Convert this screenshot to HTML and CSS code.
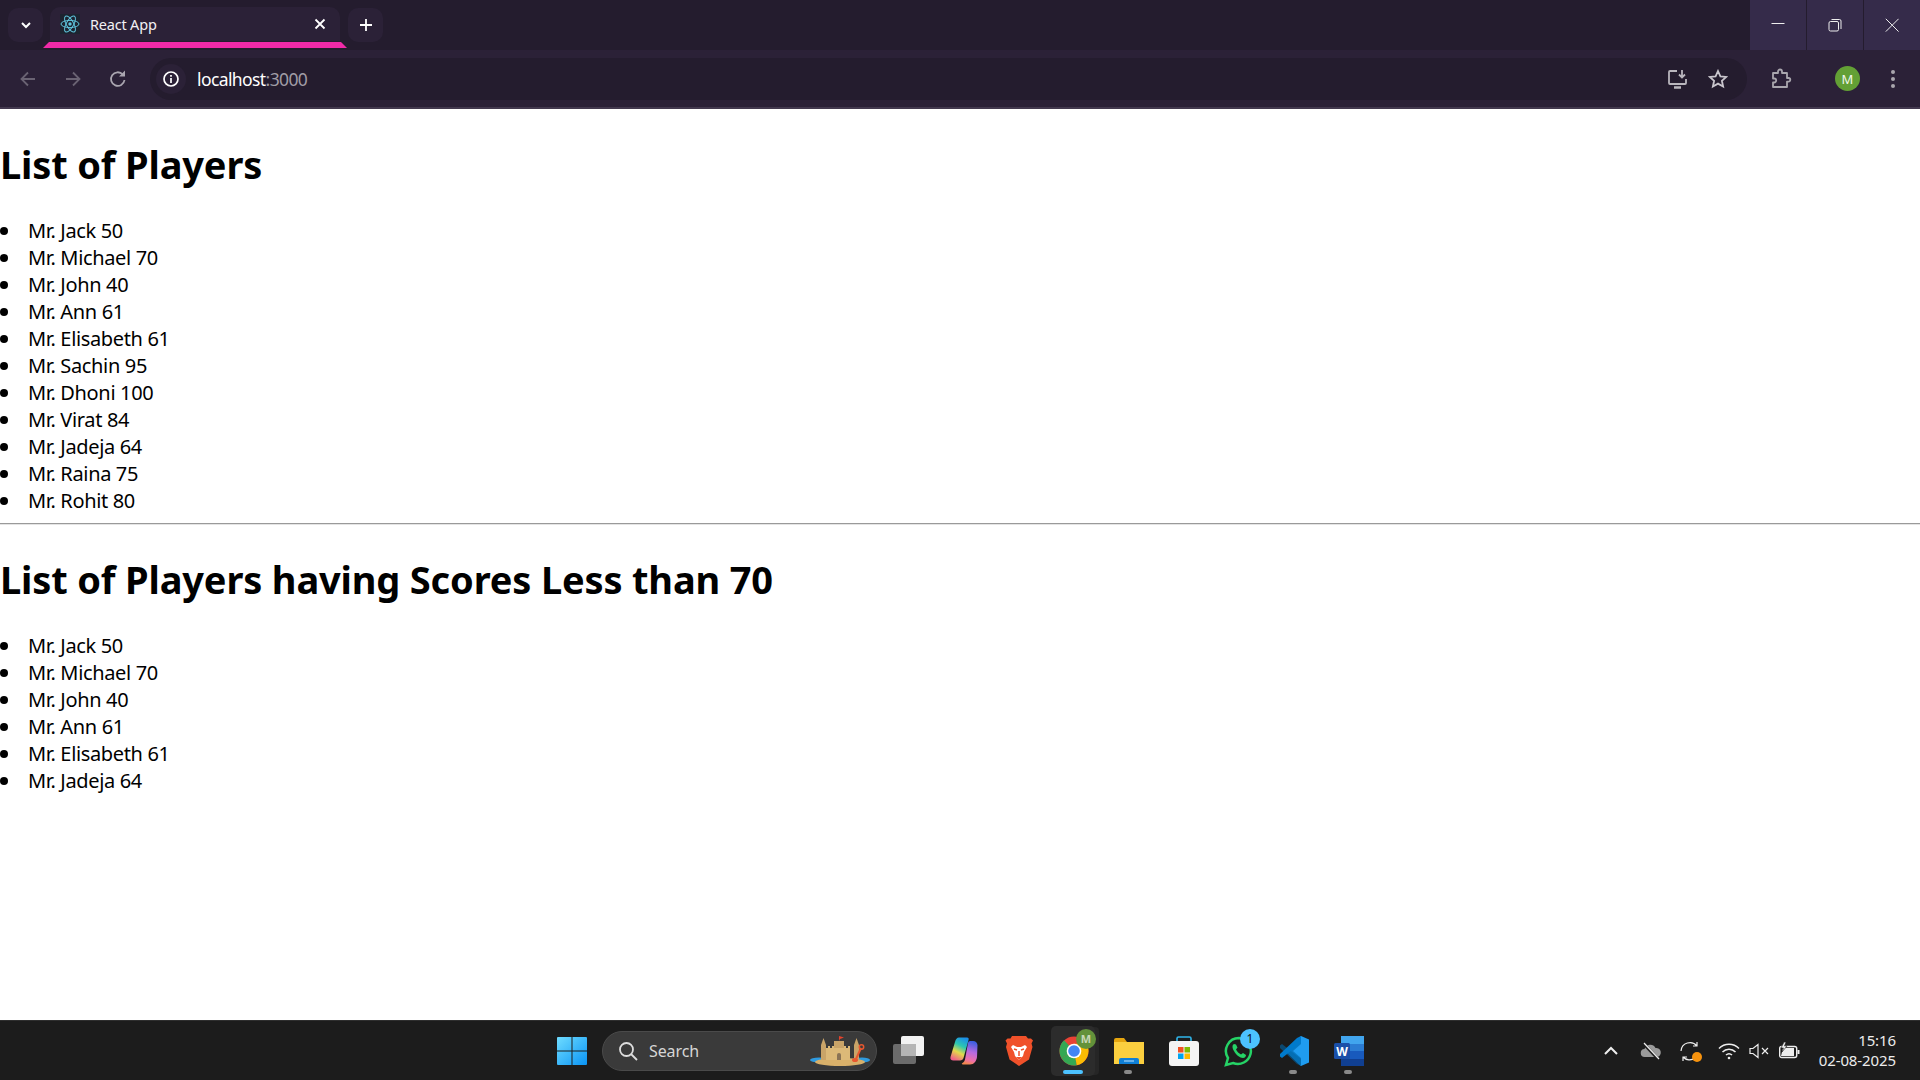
FILE: index.html
```html
<!DOCTYPE html>
<html lang="en">
<head>
<meta charset="utf-8">
<title>React App</title>
<link rel="stylesheet" href="styles.css">
</head>
<body>
<div class="screen">
  <header class="chrome">
    <div class="tabstrip">
      <button class="strip-btn"><svg width="16" height="16" viewBox="0 0 16 16"><path d="M4 6l4 4 4-4" fill="none" stroke="#fff" stroke-width="2"/></svg></button>
      <div class="tab">
        <span class="favicon"><svg width="20" height="20" viewBox="0 0 20 20" fill="none" stroke="#5fc4dc" stroke-width="1"><ellipse cx="10" cy="10" rx="9" ry="3.6"/><ellipse cx="10" cy="10" rx="9" ry="3.6" transform="rotate(60 10 10)"/><ellipse cx="10" cy="10" rx="9" ry="3.6" transform="rotate(120 10 10)"/><circle cx="10" cy="10" r="1.7" fill="#5fc4dc" stroke="none"/></svg></span>
        <span class="tab-title">React App</span>
        <svg class="tab-close" width="12" height="12" viewBox="0 0 12 12"><path d="M1.5 1.5l9 9M10.5 1.5l-9 9" stroke="#fff" stroke-width="1.8"/></svg>
      </div>
      <button class="strip-btn"><svg width="14" height="14" viewBox="0 0 14 14"><path d="M7 1v12M1 7h12" stroke="#fff" stroke-width="1.8"/></svg></button>
      <div class="strip-fill"></div>
      <div class="winbtn"><svg width="14" height="14" viewBox="0 0 14 14"><path d="M.5 5.500h13" stroke="#eee" stroke-width="1"/></svg></div>
      <div class="winbtn"><svg width="14" height="14" viewBox="0 0 14 14" fill="none" stroke="#eee" stroke-width="1"><rect x="1" y="3.500" width="9.500" height="9.500" rx="1.500"/><path d="M3.500 1.500h8a1.500 1.500 0 0 1 1.500 1.500v8"/></svg></div>
      <div class="winbtn"><svg width="14" height="14" viewBox="0 0 14 14"><path d="M.8.8l12.800 12.800M13.600.8L.8 13.600" stroke="#eee" stroke-width="1"/></svg></div>
    </div>
    <div class="toolbar">
      <svg class="nav" width="20" height="20" viewBox="0 0 20 20" fill="none" stroke="#6a6373" stroke-width="1.800"><path d="M17 10H4M10 3.500L3.500 10l6.500 6.500"/></svg>
      <svg class="nav" width="20" height="20" viewBox="0 0 20 20" fill="none" stroke="#6a6373" stroke-width="1.800"><path d="M3 10h13M10 3.500l6.500 6.500-6.500 6.500"/></svg>
      <svg class="nav" width="20" height="20" viewBox="0 0 20 20" fill="none" stroke="#aaa6b0" stroke-width="1.800"><path d="M16.500 11a6.800 6.800 0 1 1-1.700-5.500"/><path d="M17 1.500v6h-6" fill="#aaa6b0" stroke="none"/></svg>
      <div class="omnibox">
        <span class="info"><svg width="18" height="18" viewBox="0 0 18 18" fill="none" stroke="#fff" stroke-width="1.700"><circle cx="9" cy="9" r="7"/><path d="M9 8v5M9 5v1.800"/></svg></span>
        <span class="url">localhost<span class="port">:3000</span></span>
        <span class="omni-icons">
          <svg width="22" height="22" viewBox="0 0 22 22" fill="none" stroke="#b9b6bd" stroke-width="1.800"><path d="M10 3H3a1 1 0 0 0-1 1v11a1 1 0 0 0 1 1h15a1 1 0 0 0 1-1v-4"/><path d="M7 19.500h7" stroke-width="2.500"/><path d="M15 2v7M12 6.500l3 3 3-3"/></svg>
          <svg width="20" height="20" viewBox="0 0 20 20" fill="none" stroke="#c9c6cd" stroke-width="1.800"><path d="M10 2l2.400 5.300 5.800.6-4.300 3.900 1.200 5.700L10 14.600l-5.100 2.900 1.200-5.700L1.800 7.900l5.800-.6z"/></svg>
        </span>
      </div>
      <svg class="ext" width="22" height="22" viewBox="0 0 22 22" fill="none" stroke="#a9a6ad" stroke-width="1.800"><path d="M3 5h5V3.500a2 2 0 0 1 4 0V5h5v5h1.500a1.800 1.800 0 0 1 0 3.600H17V19H3v-4.500h1.200a2 2 0 0 0 0-4H3z" stroke-linejoin="round"/></svg>
      <span class="avatar">M</span>
      <svg class="kebab" width="6" height="20" viewBox="0 0 6 20" fill="#a9a6ad"><circle cx="3" cy="3" r="2"/><circle cx="3" cy="10" r="2"/><circle cx="3" cy="17" r="2"/></svg>
    </div>
  </header>

  <main class="page">
    <h1 class="title">List of Players</h1>
    <ul class="players">
      <li>Mr. Jack 50</li>
      <li>Mr. Michael 70</li>
      <li>Mr. John 40</li>
      <li>Mr. Ann 61</li>
      <li>Mr. Elisabeth 61</li>
      <li>Mr. Sachin 95</li>
      <li>Mr. Dhoni 100</li>
      <li>Mr. Virat 84</li>
      <li>Mr. Jadeja 64</li>
      <li>Mr. Raina 75</li>
      <li>Mr. Rohit 80</li>
    </ul>
    <hr class="rule">
    <h1 class="title">List of Players having Scores Less than 70</h1>
    <ul class="players">
      <li>Mr. Jack 50</li>
      <li>Mr. Michael 70</li>
      <li>Mr. John 40</li>
      <li>Mr. Ann 61</li>
      <li>Mr. Elisabeth 61</li>
      <li>Mr. Jadeja 64</li>
    </ul>
  </main>

  <footer class="taskbar">
    <div class="task-spacer"></div>
    <div class="task-center">
      <span class="task-item">
        <svg width="30" height="30" viewBox="0 0 30 30"><defs><linearGradient id="win" x1="0" y1="0" x2="1" y2="1"><stop offset="0" stop-color="#6fdcff"/><stop offset="1" stop-color="#0a94f5"/></linearGradient></defs><path fill="url(#win)" d="M1 1h13.500v13.500H0V2a1 1 0 0 1 1-1zM15.500 1H29a1 1 0 0 1 1 1v12.500H15.500zM0 15.500h14.500V29H1a1 1 0 0 1-1-1zM15.500 15.500H30V28a1 1 0 0 1-1 1H15.500z"/></svg>
      </span>
      <div class="search">
        <svg width="20" height="20" viewBox="0 0 20 20" fill="none" stroke="#ddd" stroke-width="1.800"><circle cx="8.500" cy="8.500" r="6.500"/><path d="M13 13l6 6"/></svg>
        <span class="search-text">Search</span>
        <svg class="castle" width="60" height="32" viewBox="0 0 60 32"><ellipse cx="9" cy="25" rx="9" ry="2.500" fill="#2f9be0"/><ellipse cx="52" cy="25" rx="8" ry="2.500" fill="#2f9be0"/><ellipse cx="30" cy="27" rx="25" ry="4" fill="#d8b06a"/><path d="M11 10l2.500-7 2.500 7v15h-5zM44 10l2.500-7 2.500 7v15h-5z" fill="#c9a468"/><path d="M16 13h2v-2h2v2h2v-2h2v2h2v-2h2v2h2v-2h2v2h2v-2h2v2h2v-2h2v14H16z" fill="#dcb978"/><path d="M24 6h10v7H24z" fill="#c9a468"/><path d="M29 6V1l5 1.500-4 1.500" fill="#e5432c"/><path d="M27 25v-5a2 2 0 0 1 4 0v5z" fill="#8a7355"/><path d="M51 13l-5 11" stroke="#e8572f" stroke-width="2"/><circle cx="51.500" cy="12" r="2.200" fill="none" stroke="#e8572f" stroke-width="1.500"/><ellipse cx="45" cy="25" rx="3" ry="2" fill="#e8572f"/></svg>
      </div>
      <span class="task-item">
        <svg width="32" height="30" viewBox="0 0 32 30"><rect x="0" y="8" width="23" height="20" rx="2" fill="#6b6b6b"/><rect x="8" y="0" width="23" height="20" rx="2" fill="#f2f2f2"/><rect x="8" y="8" width="15" height="12" fill="#b5b5b5"/></svg>
      </span>
      <span class="task-item">
        <svg width="28" height="28" viewBox="0 0 28 28"><defs><linearGradient id="cpa" x1="0.700" y1="0" x2="0.300" y2="1"><stop offset="0" stop-color="#1c8fe8"/><stop offset=".35" stop-color="#2cc7b0"/><stop offset=".65" stop-color="#e3d94a"/><stop offset="1" stop-color="#ef5f8a"/></linearGradient><linearGradient id="cpb" x1="0.600" y1="0" x2="0.400" y2="1"><stop offset="0" stop-color="#3a5fe0"/><stop offset=".45" stop-color="#b76ae0"/><stop offset=".8" stop-color="#ef6fa8"/><stop offset="1" stop-color="#f2884a"/></linearGradient></defs><path d="M9 .5h8c1.500 0 2 1 1.500 2.500L13.500 21c-.5 1.500-1.500 2.500-3.500 2.500H3.500C1 23.500 0 22 .5 20L5 5C5.800 2 7 .5 9 .5z" fill="url(#cpa)"/><path d="M20 4h3c2.500 0 4 1.500 4.500 4L27 20c-.5 4-3 7.500-7 7.500h-7c-1.500 0-1.500-1-.5-1.500 1.500-.8 2-2 2.500-3.500L18 6c.3-1.200 1-2 2-2z" fill="url(#cpb)"/></svg>
      </span>
      <span class="task-item">
        <svg width="28" height="30" viewBox="0 0 28 30"><path d="M7 0h14l2 2.500h3l2 2-1.500 3 1 3.500-3.500 12.500L14 30 4.500 23.500 1 11l1-3.500L.5 4.500l2-2h3z" fill="#f0512a"/><path d="M8 9l4 2h4l4-2 2 2-3 5-1 4-4 4-4-4-1-4-3-5z" fill="#fff"/><path d="M11 21h6l-3 3z" fill="#f0512a"/><path d="M9 13l3 1M19 13l-3 1M14 15v5" stroke="#f0512a" stroke-width="1.500"/></svg>
      </span>
      <span class="task-item task-active">
        <svg class="chrome-logo" width="30" height="30" viewBox="0 0 32 32"><circle cx="16" cy="16" r="15.500" fill="#e94235"/><path d="M16 16L2.600 23.700A15.500 15.500 0 0 0 19 31.200z" fill="#34a853"/><path d="M16 16l3 15.200A15.500 15.500 0 0 0 29.400 8.300H16z" fill="#fbbc04"/><path d="M16 16L2.600 23.700A15.500 15.500 0 0 1 5.500 4.500z" fill="#34a853"/><circle cx="16" cy="16" r="7.800" fill="#fff"/><circle cx="16" cy="16" r="6.200" fill="#4285f4"/></svg>
        <span class="profile-badge">M</span>
        <span class="run-active"></span>
      </span>
      <span class="task-item">
        <svg width="30" height="26" viewBox="0 0 30 26"><path d="M0 2a2 2 0 0 1 2-2h8l3 4h17v22H0z" fill="#e5a50f"/><rect x="0" y="4" width="30" height="22" fill="#fbcf3f"/><path d="M5 26v-4a2 2 0 0 1 2-2h16a2 2 0 0 1 2 2v4z" fill="#0f7fd6"/><rect x="10" y="22.500" width="10" height="1" fill="#bfe3ff"/></svg>
        <span class="run-dot"></span>
      </span>
      <span class="task-item">
        <svg width="30" height="30" viewBox="0 0 30 30"><path d="M8 5V2.500A1.500 1.500 0 0 1 9.500 1h11A1.500 1.500 0 0 1 22 2.500V5" fill="none" stroke="#2fb5ea" stroke-width="1.600"/><rect x="0" y="5" width="30" height="25" rx="3" fill="#f4f4f4"/><rect x="9" y="11" width="5.500" height="5.500" fill="#f25022"/><rect x="15.500" y="11" width="5.500" height="5.500" fill="#7fba00"/><rect x="9" y="17.500" width="5.500" height="5.500" fill="#00a4ef"/><rect x="15.500" y="17.500" width="5.500" height="5.500" fill="#ffb900"/></svg>
      </span>
      <span class="task-item">
        <svg width="32" height="32" viewBox="0 0 32 32"><path d="M16 3a13 13 0 0 0-11 20L3 30l7-2a13 13 0 1 0 6-25z" fill="none" stroke="#25d366" stroke-width="2.500"/><path d="M11 9c-2 1-2 4 0 7 2 4 6 7 9 7 2 0 3-2 3-3l-3-2-2 1.500c-2-1-4-3-5-5l1.500-2-1.500-3z" fill="#25d366"/></svg>
        <span class="count-badge">1</span>
      </span>
      <span class="task-item">
        <svg width="30" height="30" viewBox="0 0 30 30"><path d="M22 0l8 3.500v23L22 30 8 16z" fill="#1f9cf0"/><path d="M22 0L6 15l16 15V22l-8-7 8-7z" fill="#0a7ac4"/><path d="M1 9.500L3 8l19 15v7l-4-2L1 12z" fill="#0065a9" opacity=".6"/><path d="M1 20.500L3 22 22 7V0l-4 2L1 18z" fill="#007acc"/></svg>
        <span class="run-dot"></span>
      </span>
      <span class="task-item">
        <svg width="30" height="30" viewBox="0 0 30 30"><rect x="7" y="0" width="23" height="30" rx="2" fill="#2b7cd3"/><rect x="7" y="0" width="23" height="8" fill="#41a5ee"/><rect x="7" y="15" width="23" height="8" fill="#185abd"/><rect x="7" y="23" width="23" height="7" fill="#103f91"/><rect x="0" y="7" width="16" height="16" rx="1.500" fill="#1a4fa8"/><text class="word-w" x="8" y="19.500" text-anchor="middle">W</text></svg>
        <span class="run-dot"></span>
      </span>
    </div>
    <div class="tray">
      <svg width="16" height="16" viewBox="0 0 16 16"><path d="M2 11l6-6 6 6" fill="none" stroke="#eee" stroke-width="2"/></svg>
      <svg class="tray-cloud" width="22" height="18" viewBox="0 0 22 18"><path d="M5 15a4 4 0 0 1-.500-8 6 6 0 0 1 11-1 4.500 4.500 0 0 1 1.500 9z" fill="#9a9a9a"/><path d="M3 1l15 16" stroke="#1c1c1c" stroke-width="3"/><path d="M4 1l15 16" stroke="#eee" stroke-width="1.200"/></svg>
      <span class="tray-sync">
        <svg width="22" height="22" viewBox="0 0 22 22" fill="none" stroke="#eee" stroke-width="1.200"><path d="M2 11a9 9 0 0 1 16-5M18 2v4h-4"/><path d="M16 18a9 9 0 0 1-12-1M4 21v-4h4"/></svg>
        <span class="sync-dot"></span>
      </span>
      <svg class="tray-wifi" width="22" height="18" viewBox="0 0 22 18" fill="none" stroke="#eee" stroke-width="1.500"><path d="M1 6.500a14 14 0 0 1 20 0M4.500 10a9 9 0 0 1 13 0M8 13a4.500 4.500 0 0 1 6 0"/><circle cx="11" cy="16" r="1.300" fill="#eee" stroke="none"/></svg>
      <svg class="tray-vol" width="22" height="16" viewBox="0 0 22 16" fill="none" stroke="#eee" stroke-width="1.200"><path d="M1 5.500h3L9 1.500v13l-5-4H1z"/><path d="M13 5l6 6M19 5l-6 6"/></svg>
      <svg class="tray-batt" width="22" height="18" viewBox="0 0 22 18"><rect x="1.700" y="4.500" width="17" height="11" rx="2" fill="none" stroke="#eee" stroke-width="1.400"/><path d="M3 14l2-8h11v8z" fill="#eee"/><rect x="19.500" y="8" width="2" height="4" fill="#eee"/><path d="M6 0L3 6h2.500L4 10l5-6H6.500L8 0z" fill="#eee" stroke="#1c1c1c" stroke-width=".600"/></svg>
      <div class="clock"><span>15:16</span><span>02-08-2025</span></div>
    </div>
  </footer>
</div>
</body>
</html>
```

FILE: styles.css
```css
* { box-sizing: border-box; }
html, body { margin: 0; padding: 0; height: 100%; }
body { font-family: "Noto Sans", "Open Sans", sans-serif; background: #fff; color: #000; overflow: hidden; }
.screen { display: flex; flex-direction: column; height: 1080px; width: 1920px; }

/* Browser chrome */
.chrome { flex: 0 0 109px; display: flex; flex-direction: column; background: #2b2137; border-bottom: 2px solid #43394f; }
.tabstrip { flex: 0 0 50px; display: flex; align-items: flex-start; background: #241c2e; }
.strip-btn { width: 35px; height: 34px; margin: 8px 0 0 8px; padding: 0; border: 0; border-radius: 10px; background: #2b2137; display: flex; align-items: center; justify-content: center; flex: none; }
.tab { position: relative; width: 290px; height: 34px; margin: 7px 0 0 7px; padding: 0 12px 0 10px; border-radius: 10px 10px 0 0; background: #2b2137; display: flex; align-items: center; flex: none; }
.tab::after { content: ""; position: absolute; left: -7px; right: -7px; bottom: -7px; height: 6px; background: #f02aa8; clip-path: polygon(6px 0, calc(100% - 6px) 0, 100% 100%, 0 100%); }
.favicon { width: 20px; height: 20px; background: #1d2430; display: flex; }
.tab-title { margin-left: 10px; flex: 1; color: #f2f0f4; font-size: 14.500px; letter-spacing: -.2px; }
.tab-close { margin-right: 2px; }
.strip-fill { flex: 1; }
.winbtn { width: 56px; height: 50px; margin-left: 1px; background: #352b4a; display: flex; align-items: center; justify-content: center; flex: none; }

.toolbar { flex: 1; display: flex; align-items: center; padding: 0 0 0 18px; }
.nav { margin-right: 25px; flex: none; }
.omnibox { width: 1597px; height: 42px; margin-left: -3px; border-radius: 21px; background: #241c2e; display: flex; align-items: center; padding: 0 0 0 6px; flex: none; }
.info { width: 30px; height: 30px; border-radius: 50%; background: #2b2137; display: flex; align-items: center; justify-content: center; }
.url { margin-left: 11px; font-size: 17.500px; color: #fff; letter-spacing: -.6px; }
.port { color: #a09ca6; }
.omni-icons { margin-left: auto; margin-right: 19px; display: flex; align-items: center; gap: 19px; }
.ext { margin-left: 23px; flex: none; }
.avatar { width: 25px; height: 25px; margin-left: 43px; border-radius: 50%; background: #63a035; color: #f1f6ec; font-size: 13px; display: flex; align-items: center; justify-content: center; flex: none; }
.kebab { margin-left: 30px; flex: none; }

/* Page */
.page { flex: 1; min-height: 0; padding-top: 1px; }
.title { margin: 28px 0 0; font-size: 38px; line-height: 53px; font-weight: 700; letter-spacing: -.16px; }
.players { margin: 26px 0 9px; padding: 0; list-style: none; font-size: 20px; line-height: 27px; letter-spacing: -.35px; }
.players li { display: flex; align-items: center; }
.players li::before { content: ""; flex: none; width: 8px; height: 8px; margin-right: 20px; border-radius: 50%; background: #000; }
.rule { margin: 9px 0 0; border: 0; border-top: 1px solid #9a9a9a; border-bottom: 1px solid #e4e4e4; height: 2px; }

/* Taskbar */
.taskbar { flex: 0 0 60px; display: grid; grid-template-columns: 1fr auto 1fr; align-items: center; background: #1c1c1c; border-top: 1px solid #2e2e2e; }
.task-center { display: flex; align-items: center; }
.task-item { position: relative; width: 55px; height: 50px; display: flex; align-items: center; justify-content: center; flex: none; }
.search { width: 275px; height: 40px; margin: 0 4px 0 3px; padding: 0 6px 0 15px; border-radius: 20px; background: #3a3a3a; border: 1px solid #4a4a4a; display: flex; align-items: center; flex: none; }
.search-text { margin-left: 11px; flex: 1; color: #d6d6d6; font-size: 16px; letter-spacing: -.1px; }
.task-active::before { content: ""; position: absolute; left: 5px; top: 0; width: 44px; height: 50px; border-radius: 5px; background: #2c2c2c; box-shadow: 5px 0 0 -1px #262626; }
.chrome-logo { position: relative; margin-top: 1px; }
.profile-badge { position: absolute; left: 30px; top: 3px; width: 20px; height: 20px; border-radius: 50%; background: #63923a; color: #c8d8b8; font-size: 11px; font-weight: 700; display: flex; align-items: center; justify-content: center; }
.run-active { position: absolute; left: 17px; bottom: 2px; width: 20px; height: 4px; border-radius: 2px; background: #4cc2ff; }
.run-dot { position: absolute; left: 23px; bottom: 2px; width: 8px; height: 4px; border-radius: 2px; background: #8a8a8a; }
.count-badge { position: absolute; left: 29px; top: 3px; width: 20px; height: 20px; border-radius: 50%; background: #4cc2ff; color: #111; font-size: 12px; display: flex; align-items: center; justify-content: center; }
.word-w { fill: #fff; font-family: "Noto Sans", sans-serif; font-size: 12px; font-weight: 700; }

.tray { display: flex; align-items: center; justify-content: flex-end; padding-right: 24px; }
.tray-cloud { margin-left: 21px; }
.tray-sync { position: relative; display: flex; margin-left: 17px; }
.sync-dot { position: absolute; right: -1px; bottom: 0; width: 10px; height: 10px; border-radius: 50%; background: #f7930e; }
.tray-wifi { margin-left: 17px; }
.tray-vol { margin-left: 9px; }
.tray-batt { margin-left: 7px; }
.clock { margin-left: 19px; padding-bottom: 2px; display: flex; flex-direction: column; align-items: flex-end; color: #ececec; font-size: 15px; line-height: 20px; letter-spacing: -.1px; }
```
